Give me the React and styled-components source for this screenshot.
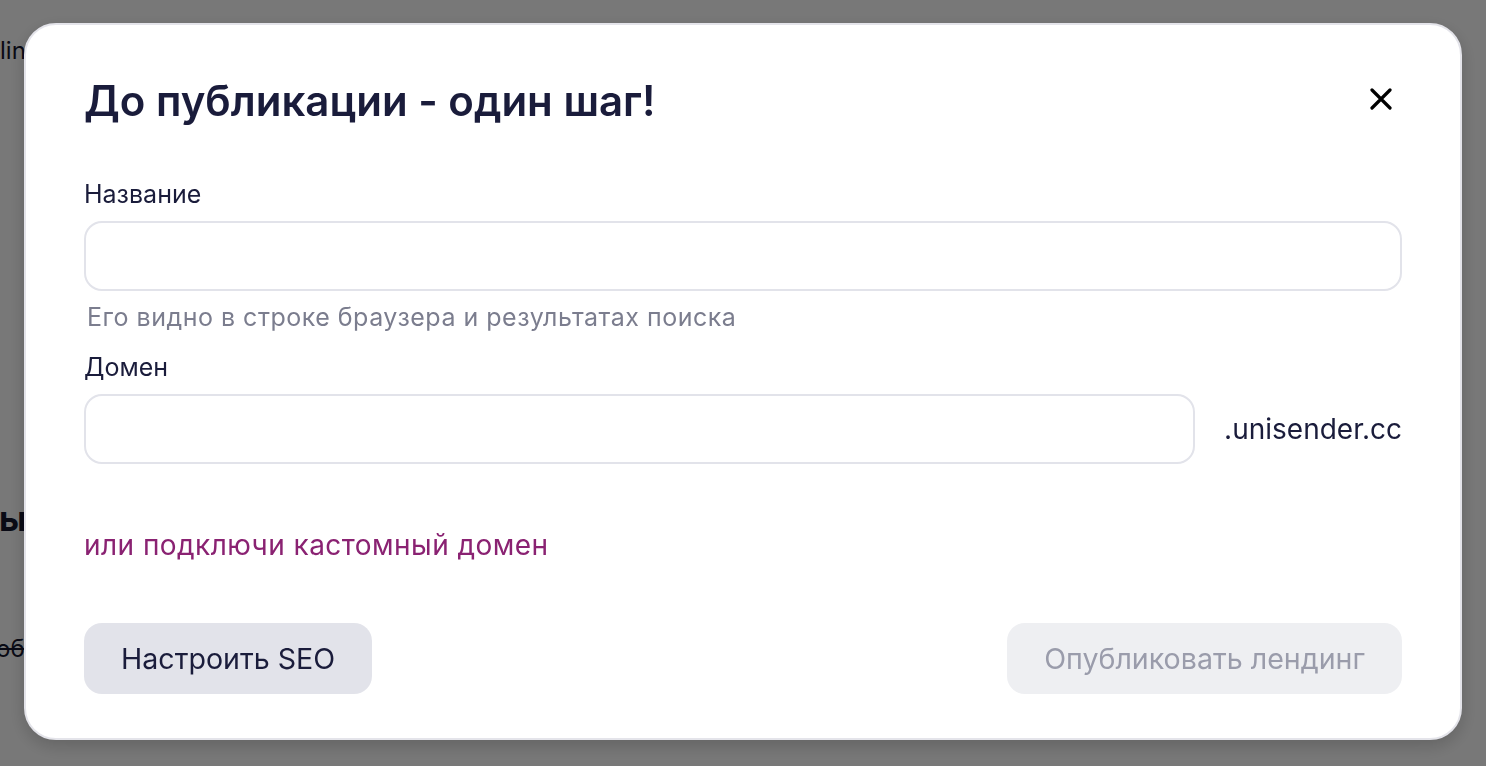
import React, { useState } from 'react';
import styled, { createGlobalStyle } from 'styled-components';

const GlobalStyle = createGlobalStyle`
  html, body {
    margin: 0;
    padding: 0;
    background: #fff;
    font-family: Inter, "Noto Sans", sans-serif;
  }
  * {
    box-sizing: border-box;
  }
`;

const App = () => {
  const [name, setName] = useState('');
  const [domain, setDomain] = useState('');

  return (
    <>
      <GlobalStyle />
      <Page>
        <PageTitle>linding</PageTitle>
        <PageHeading>ыы настройки</PageHeading>
        <PageStruck>обновление</PageStruck>
      </Page>

      <Overlay>
        <Modal>
          <Header>
            <Title>До публикации - один шаг!</Title>
            <CloseBtn type="button" aria-label="Закрыть">
              <svg width="22" height="22" viewBox="0 0 22 22">
                <path
                  d="M2 2 L20 20 M20 2 L2 20"
                  stroke="#000"
                  strokeWidth="3.2"
                  strokeLinecap="round"
                />
              </svg>
            </CloseBtn>
          </Header>

          <Label>Название</Label>
          <Input
            type="text"
            value={name}
            onChange={(e) => setName(e.target.value)}
          />
          <Hint>Его видно в строке браузера и результатах поиска</Hint>

          <Label $top={20}>Домен</Label>
          <DomainRow>
            <Input
              type="text"
              value={domain}
              onChange={(e) => setDomain(e.target.value)}
            />
            <Suffix>.unisender.cc</Suffix>
          </DomainRow>

          <CustomLink href="#">или подключи кастомный домен</CustomLink>

          <Footer>
            <Button type="button">Настроить SEO</Button>
            <Button type="button" $disabled disabled>
              Опубликовать лендинг
            </Button>
          </Footer>
        </Modal>
      </Overlay>
    </>
  );
};

export default App;

const Page = styled.div`
  width: 1486px;
  height: 766px;
  overflow: hidden;
  color: #15172e;
  font-family: Inter, sans-serif;
`;

const PageTitle = styled.div`
  padding-top: 36px;
  font-size: 24px;
  line-height: 30px;
`;

const PageHeading = styled.div`
  margin-top: 433px;
  margin-left: -1px;
  font-size: 34px;
  font-weight: 700;
  line-height: 40px;
`;

const PageStruck = styled.div`
  margin-top: 95px;
  margin-left: -4px;
  font-size: 24px;
  line-height: 30px;
  text-decoration: line-through;
`;

const Overlay = styled.div`
  position: fixed;
  inset: 0;
  padding-bottom: 3px;
  background: rgba(0, 0, 0, 0.53);
  display: flex;
  align-items: center;
  justify-content: center;
`;

const Modal = styled.div`
  width: 1438px;
  background: #fff;
  border: 2px solid #e4e4ea;
  border-radius: 32px;
  padding: 51px 58px 44px;
  display: flex;
  flex-direction: column;
  box-shadow: 0 6px 18px rgba(0, 0, 0, 0.18);
`;

const Header = styled.div`
  display: flex;
  align-items: center;
  justify-content: space-between;
`;

const Title = styled.h2`
  margin: 0;
  font-size: 42px;
  line-height: 50px;
  font-weight: 600;
  color: #1a1c3b;
`;

const CloseBtn = styled.button`
  width: 34px;
  height: 34px;
  margin: -4px 4px 0 0;
  padding: 0;
  border: none;
  background: none;
  display: flex;
  align-items: center;
  justify-content: center;
  cursor: pointer;
`;

const Label = styled.label`
  margin-top: ${(p) => p.$top ?? 53}px;
  font-size: 25px;
  line-height: 30px;
  color: #1a1c3b;
`;

const Input = styled.input`
  width: 100%;
  height: 70px;
  margin-top: 12px;
  padding: 0 20px;
  border: 2px solid #e2e3ea;
  border-radius: 18px;
  outline: none;
  font-family: inherit;
  font-size: 24px;
  color: #1a1c3b;
  background: #fff;
`;

const Hint = styled.div`
  margin-top: 11px;
  padding-left: 3px;
  font-size: 25px;
  line-height: 30px;
  letter-spacing: 0.5px;
  color: #7b7d8e;
`;

const DomainRow = styled.div`
  display: flex;
  align-items: flex-end;
  gap: 29px;
  & > input {
    flex: 1;
  }
`;

const Suffix = styled.span`
  height: 70px;
  display: flex;
  align-items: center;
  font-size: 28px;
  color: #1a1c3b;
`;

const CustomLink = styled.a`
  align-self: flex-start;
  margin-top: 64px;
  font-size: 28px;
  line-height: 34px;
  letter-spacing: 0.45px;
  color: #8a2272;
  text-decoration: none;
`;

const Footer = styled.div`
  margin-top: 61px;
  display: flex;
  justify-content: space-between;
`;

const Button = styled.button`
  height: 71px;
  padding: 0 37px;
  border: none;
  border-radius: 18px;
  font-family: inherit;
  font-size: 28.6px;
  color: ${(p) => (p.$disabled ? '#9a9cab' : '#1a1c3b')};
  background: ${(p) => (p.$disabled ? '#eeeff2' : '#e2e3ea')};
  cursor: ${(p) => (p.$disabled ? 'default' : 'pointer')};
`;
